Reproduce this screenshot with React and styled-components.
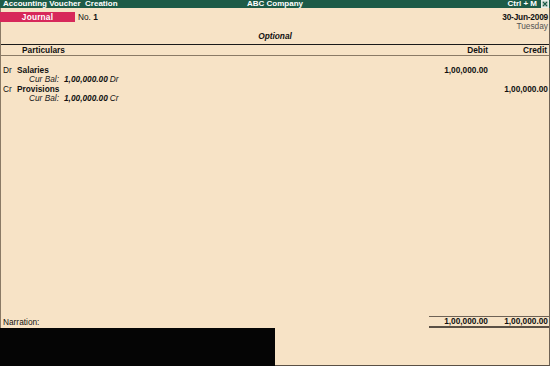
import React from "react";
import styled, { createGlobalStyle } from "styled-components";

const entries = [
  { side: "Dr", ledger: "Salaries", balance: "1,00,000.00", suffix: "Dr", debit: "1,00,000.00", credit: "" },
  { side: "Cr", ledger: "Provisions", balance: "1,00,000.00", suffix: "Cr", debit: "", credit: "1,00,000.00" },
];

const App = () => {
  return (
    <>
      <GlobalStyle />
      <Screen>
        <TitleBar>
          <TitleLeft>Accounting Voucher&nbsp; Creation</TitleLeft>
          <TitleCenter>ABC Company</TitleCenter>
          <TitleRight>
            Ctrl + M
            <CloseBox viewBox="0 0 8 8" width="8" height="8">
              <rect x="0.5" y="0.5" width="7" height="7" fill="#c9d3cc" stroke="#e8eee9" />
              <path d="M2 2 L6 6 M6 2 L2 6" stroke="#1d5b47" strokeWidth="1.1" />
            </CloseBox>
          </TitleRight>
        </TitleBar>

        <Frame>
          <TopRow>
            <VoucherInfo>
              <VoucherTag>Journal</VoucherTag>
              <VoucherNo>
                No. <b>1</b>
              </VoucherNo>
            </VoucherInfo>
            <DateBlock>
              <DateText>30-Jun-2009</DateText>
              <DayText>Tuesday</DayText>
            </DateBlock>
          </TopRow>

          <OptionalLabel>Optional</OptionalLabel>

          <HeaderRow>
            <HeadCell>Particulars</HeadCell>
            <AmountCell $head>Debit</AmountCell>
            <AmountCell $head $last>Credit</AmountCell>
          </HeaderRow>

          <Entries>
            {entries.map((e) => (
              <Entry key={e.ledger}>
                <EntryRow>
                  <LedgerCell>
                    <Side>{e.side}</Side>
                    <LedgerName>{e.ledger}</LedgerName>
                  </LedgerCell>
                  <AmountCell>{e.debit}</AmountCell>
                  <AmountCell $last>{e.credit}</AmountCell>
                </EntryRow>
                <BalanceRow>
                  <BalLabel>Cur Bal:</BalLabel>
                  <BalValue>{e.balance}</BalValue>
                  <BalSuffix>{e.suffix}</BalSuffix>
                </BalanceRow>
              </Entry>
            ))}
          </Entries>

          <Footer>
            <Narration>Narration:</Narration>
            <Totals>
              <AmountCell>1,00,000.00</AmountCell>
              <AmountCell $last>1,00,000.00</AmountCell>
            </Totals>
          </Footer>
        </Frame>

        <BottomRow>
          <BlackPanel />
          <BottomRest />
        </BottomRow>
      </Screen>
    </>
  );
};

export default App;

const GlobalStyle = createGlobalStyle`
  html, body {
    margin: 0;
    padding: 0;
    background: #f7e3c6;
  }
  body {
    font-family: "Liberation Sans", Arial, sans-serif;
    font-size: 8.3px;
    color: #111;
  }
`;

const Screen = styled.div`
  width: 550px;
  height: 366px;
  display: flex;
  flex-direction: column;
  background: #f7e3c6;
  overflow: hidden;
`;

const TitleBar = styled.div`
  height: 8px;
  flex: none;
  background: #1d5b47;
  color: #fff;
  font-weight: bold;
  font-size: 8px;
  line-height: 8px;
  display: grid;
  grid-template-columns: 1fr auto 1fr;
  align-items: center;
`;

const TitleLeft = styled.div`
  padding-left: 3px;
  white-space: nowrap;
`;

const TitleCenter = styled.div`
  white-space: nowrap;
`;

const TitleRight = styled.div`
  display: flex;
  justify-content: flex-end;
  align-items: center;
  gap: 4px;
  padding-right: 1px;
  white-space: nowrap;
`;

const CloseBox = styled.svg`
  display: block;
`;

const Frame = styled.div`
  flex: 1;
  display: flex;
  flex-direction: column;
  border-left: 1px solid #8a7a66;
  border-right: 1px solid #6e6255;
`;

const TopRow = styled.div`
  display: flex;
  justify-content: space-between;
  align-items: flex-start;
  padding-top: 4px;
`;

const VoucherInfo = styled.div`
  display: flex;
  align-items: center;
  gap: 3px;
  margin-left: -1px;
`;

const VoucherTag = styled.div`
  width: 75px;
  height: 10px;
  line-height: 10px;
  background: #d7285a;
  color: #fff;
  font-weight: bold;
  text-align: center;
  letter-spacing: 0.2px;
`;

const VoucherNo = styled.div`
  line-height: 10px;
`;

const DateBlock = styled.div`
  text-align: right;
  padding-right: 1px;
`;

const DateText = styled.div`
  font-weight: bold;
  line-height: 10px;
  letter-spacing: -0.2px;
`;

const DayText = styled.div`
  color: #555;
  line-height: 9px;
`;

const OptionalLabel = styled.div`
  text-align: center;
  font-weight: bold;
  font-style: italic;
  line-height: 10px;
`;

const HeaderRow = styled.div`
  margin-top: 3px;
  display: flex;
  border-top: 1px solid #1a1a1a;
  border-bottom: 1px solid #8a7a66;
  line-height: 10px;
  font-weight: bold;
`;

const HeadCell = styled.div`
  flex: 1;
  padding-left: 21px;
`;

const AmountCell = styled.div`
  width: 60px;
  flex: none;
  text-align: right;
  font-weight: bold;
  padding-right: ${(p) => (p.$head && p.$last ? "2px" : "1px")};
  box-sizing: border-box;
  white-space: nowrap;
`;

const Entries = styled.div`
  flex: 1;
  padding-top: 9px;
`;

const Entry = styled.div``;

const EntryRow = styled.div`
  display: flex;
  line-height: 10px;
`;

const LedgerCell = styled.div`
  flex: 1;
  display: flex;
`;

const Side = styled.span`
  width: 16px;
  padding-left: 2px;
  box-sizing: border-box;
`;

const LedgerName = styled.span`
  font-weight: bold;
`;

const BalanceRow = styled.div`
  padding-left: 28px;
  line-height: 9px;
  font-style: italic;
  display: flex;
  gap: 4px;
`;

const BalLabel = styled.span`
  color: #222;
`;

const BalValue = styled.span`
  font-weight: bold;
  margin-left: 1px;
`;

const BalSuffix = styled.span`
  margin-left: -2px;
`;

const Footer = styled.div`
  display: flex;
  justify-content: space-between;
  align-items: center;
`;

const Narration = styled.div`
  padding-left: 2px;
  line-height: 9px;
`;

const Totals = styled.div`
  display: flex;
  width: 120px;
  line-height: 9px;
  border-top: 1px solid #6e6255;
  border-bottom: 2px solid #5a5045;
`;

const BottomRow = styled.div`
  height: 38px;
  flex: none;
  display: flex;
`;

const BlackPanel = styled.div`
  width: 275px;
  background: #050505;
`;

const BottomRest = styled.div`
  flex: 1;
  border-right: 1px solid #6e6255;
  border-bottom: 1px solid #5a5045;
`;
